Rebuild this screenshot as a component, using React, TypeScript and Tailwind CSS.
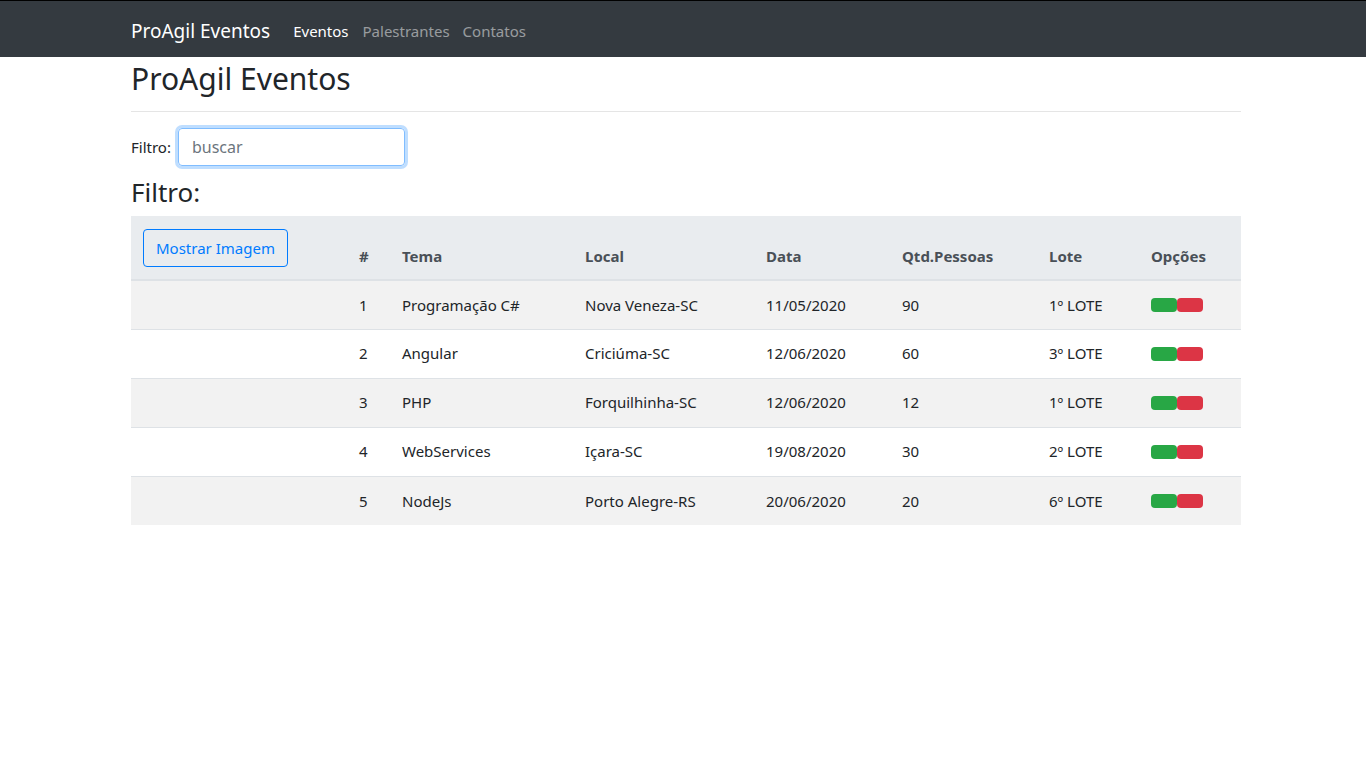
import React from 'react';

interface Evento {
  id: number;
  tema: string;
  local: string;
  data: string;
  qtd: number;
  lote: string;
}

const eventos: Evento[] = [
  { id: 1, tema: 'Programação C#', local: 'Nova Veneza-SC', data: '11/05/2020', qtd: 90, lote: '1º LOTE' },
  { id: 2, tema: 'Angular', local: 'Criciúma-SC', data: '12/06/2020', qtd: 60, lote: '3º LOTE' },
  { id: 3, tema: 'PHP', local: 'Forquilhinha-SC', data: '12/06/2020', qtd: 12, lote: '1º LOTE' },
  { id: 4, tema: 'WebServices', local: 'Içara-SC', data: '19/08/2020', qtd: 30, lote: '2º LOTE' },
  { id: 5, tema: 'NodeJs', local: 'Porto Alegre-RS', data: '20/06/2020', qtd: 20, lote: '6º LOTE' },
];

export default function App() {
  return (
    <div className="min-h-screen bg-white text-[#212529] text-[16px]" style={{ fontFamily: '"Noto Sans", "Open Sans", sans-serif' }}>
      {/* Navbar */}
      <nav className="h-[57px] bg-[#343a40] border-t border-black">
        <div className="ml-[131px] w-[1110px] flex items-center h-full pt-[4px]">
          <span className="text-[19px] text-white mr-[23px]">ProAgil Eventos</span>
          <a className="text-[15px] text-white mr-[14px]">Eventos</a>
          <a className="text-[15px] text-white/50 mr-[13px]">Palestrantes</a>
          <a className="text-[15px] text-white/50">Contatos</a>
        </div>
      </nav>

      <div className="ml-[131px] w-[1110px]">
        <h1 className="text-[30px] leading-[38px] pt-[3px] pb-[13px] border-b border-[#e5e5e5]">ProAgil Eventos</h1>

        {/* Filtro */}
        <div className="flex items-center mt-[16px]">
          <label className="text-[15px]">Filtro:</label>
          <input
            className="ml-[7px] w-[227px] h-[38px] px-[13px] text-[16px] rounded-[4px] border border-[#80bdff] outline-none shadow-[0_0_0_3px_rgba(0,123,255,0.25)] placeholder:text-[#6c757d]"
            placeholder="buscar"
          />
        </div>
        <h3 className="text-[26px] leading-[32px] mt-[10px] mb-[8px]">Filtro:</h3>

        {/* Tabela */}
        <table className="w-full border-collapse text-[15px]">
          <thead className="bg-[#e9ecef] text-[#495057]">
            <tr className="border-b-2 border-[#dee2e6]">
              <th className="w-[216px] px-[12px] pt-[13px] pb-[12px] text-left align-bottom">
                <button className="h-[38px] px-[12px] rounded-[4px] border border-[#007bff] text-[#007bff] text-[15px] font-normal">
                  Mostrar Imagem
                </button>
              </th>
              <th className="w-[43px] p-[12px] text-left align-bottom font-bold">#</th>
              <th className="w-[183px] p-[12px] text-left align-bottom font-bold">Tema</th>
              <th className="w-[181px] p-[12px] text-left align-bottom font-bold">Local</th>
              <th className="w-[136px] p-[12px] text-left align-bottom font-bold">Data</th>
              <th className="w-[147px] p-[12px] text-left align-bottom font-bold">Qtd.Pessoas</th>
              <th className="w-[102px] p-[12px] text-left align-bottom font-bold">Lote</th>
              <th className="w-[102px] p-[12px] text-left align-bottom font-bold">Opções</th>
            </tr>
          </thead>
          <tbody>
            {eventos.map((e, i) => (
              <tr key={e.id} className={`${i % 2 === 0 ? 'bg-[#f2f2f2]' : 'bg-white'} border-t border-[#dee2e6] h-[49px]`}>
                <td className="px-[12px]"></td>
                <td className="px-[12px]">{e.id}</td>
                <td className="px-[12px]">{e.tema}</td>
                <td className="px-[12px]">{e.local}</td>
                <td className="px-[12px]">{e.data}</td>
                <td className="px-[12px]">{e.qtd}</td>
                <td className="px-[12px]">{e.lote}</td>
                <td className="px-[12px]">
                  <div className="flex">
                    <button className="w-[26px] h-[14px] rounded-[4px] bg-[#28a745]"></button>
                    <button className="w-[26px] h-[14px] rounded-[4px] bg-[#dc3545]"></button>
                  </div>
                </td>
              </tr>
            ))}
          </tbody>
        </table>
      </div>
    </div>
  );
}
